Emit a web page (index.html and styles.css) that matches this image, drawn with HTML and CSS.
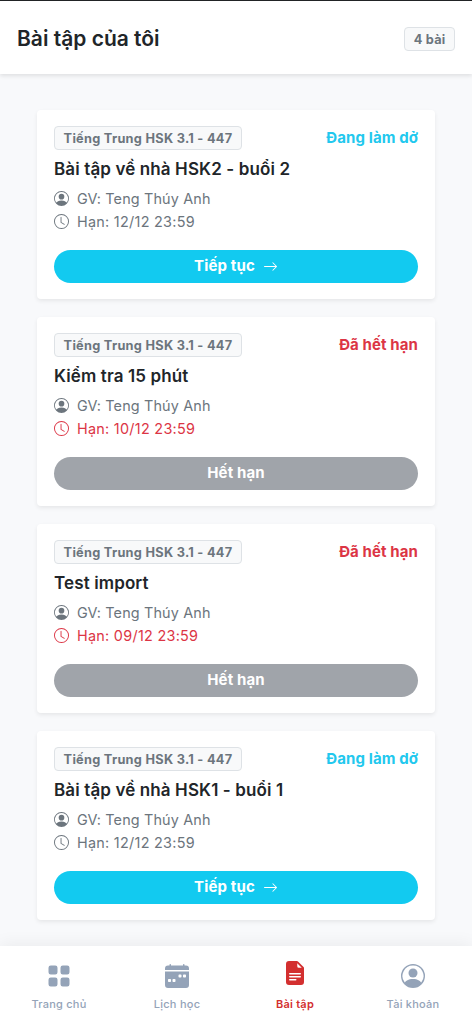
FILE: index.html
```html
<!DOCTYPE html>
<html lang="vi">
<head>
<meta charset="utf-8">
<title>Bài tập của tôi</title>
<link rel="stylesheet" href="styles.css">
</head>
<body>
<svg class="sprite" aria-hidden="true">
  <symbol id="person" viewBox="0 0 16 16"><path d="M11 6a3 3 0 1 1-6 0 3 3 0 0 1 6 0"/><path fill-rule="evenodd" d="M0 8a8 8 0 1 1 16 0A8 8 0 0 1 0 8m8-7a7 7 0 0 0-5.468 11.37C3.242 11.226 4.805 10 8 10s4.757 1.225 5.468 2.37A7 7 0 0 0 8 1"/></symbol>
  <symbol id="clock" viewBox="0 0 16 16"><path d="M8 3.5a.5.5 0 0 0-1 0V9a.5.5 0 0 0 .252.434l3.5 2a.5.5 0 0 0 .496-.868L8 8.71z"/><path d="M8 16A8 8 0 1 0 8 0a8 8 0 0 0 0 16m7-8A7 7 0 1 1 1 8a7 7 0 0 1 14 0"/></symbol>
  <symbol id="arrow" viewBox="0 0 16 16"><path fill-rule="evenodd" d="M1 8a.5.5 0 0 1 .5-.5h11.793l-3.147-3.146a.5.5 0 0 1 .708-.708l4 4a.5.5 0 0 1 0 .708l-4 4a.5.5 0 0 1-.708-.708L13.293 8.5H1.5A.5.5 0 0 1 1 8"/></symbol>
</svg>
<div class="app">
  <header class="header">
    <h1 class="header-title">Bài tập của tôi</h1>
    <span class="badge">4 bài</span>
  </header>
  <main class="list">
    <article class="card">
      <div class="card-top"><span class="badge badge-class">Tiếng Trung HSK 3.1 - 447</span><span class="status status-progress">Đang làm dở</span></div>
      <h2 class="card-title">Bài tập về nhà HSK2 - buổi 2</h2>
      <div class="meta"><svg class="meta-icon"><use href="#person"/></svg><span>GV: Teng Thúy Anh</span></div>
      <div class="meta"><svg class="meta-icon"><use href="#clock"/></svg><span class="due">Hạn: 12/12 23:59</span></div>
      <button class="btn btn-continue"><span>Tiếp tục</span><svg class="btn-icon"><use href="#arrow"/></svg></button>
    </article>
    <article class="card">
      <div class="card-top"><span class="badge badge-class">Tiếng Trung HSK 3.1 - 447</span><span class="status status-late">Đã hết hạn</span></div>
      <h2 class="card-title">Kiểm tra 15 phút</h2>
      <div class="meta"><svg class="meta-icon"><use href="#person"/></svg><span>GV: Teng Thúy Anh</span></div>
      <div class="meta meta-late"><svg class="meta-icon"><use href="#clock"/></svg><span class="due">Hạn: 10/12 23:59</span></div>
      <button class="btn btn-expired">Hết hạn</button>
    </article>
    <article class="card">
      <div class="card-top"><span class="badge badge-class">Tiếng Trung HSK 3.1 - 447</span><span class="status status-late">Đã hết hạn</span></div>
      <h2 class="card-title">Test import</h2>
      <div class="meta"><svg class="meta-icon"><use href="#person"/></svg><span>GV: Teng Thúy Anh</span></div>
      <div class="meta meta-late"><svg class="meta-icon"><use href="#clock"/></svg><span class="due">Hạn: 09/12 23:59</span></div>
      <button class="btn btn-expired">Hết hạn</button>
    </article>
    <article class="card">
      <div class="card-top"><span class="badge badge-class">Tiếng Trung HSK 3.1 - 447</span><span class="status status-progress">Đang làm dở</span></div>
      <h2 class="card-title">Bài tập về nhà HSK1 - buổi 1</h2>
      <div class="meta"><svg class="meta-icon"><use href="#person"/></svg><span>GV: Teng Thúy Anh</span></div>
      <div class="meta"><svg class="meta-icon"><use href="#clock"/></svg><span class="due">Hạn: 12/12 23:59</span></div>
      <button class="btn btn-continue"><span>Tiếp tục</span><svg class="btn-icon"><use href="#arrow"/></svg></button>
    </article>
  </main>
  <nav class="nav">
    <a class="nav-item"><svg class="nav-icon" viewBox="0 0 16 16"><path d="M1 2.5A1.5 1.5 0 0 1 2.5 1h3A1.5 1.5 0 0 1 7 2.5v3A1.5 1.5 0 0 1 5.5 7h-3A1.5 1.5 0 0 1 1 5.5zm8 0A1.5 1.5 0 0 1 10.5 1h3A1.5 1.5 0 0 1 15 2.5v3A1.5 1.5 0 0 1 13.5 7h-3A1.5 1.5 0 0 1 9 5.5zm-8 8A1.5 1.5 0 0 1 2.5 9h3A1.5 1.5 0 0 1 7 10.5v3A1.5 1.5 0 0 1 5.5 15h-3A1.5 1.5 0 0 1 1 13.5zm8 0A1.5 1.5 0 0 1 10.5 9h3a1.5 1.5 0 0 1 1.5 1.5v3a1.5 1.5 0 0 1-1.5 1.5h-3A1.5 1.5 0 0 1 9 13.5z"/></svg><span>Trang chủ</span></a>
    <a class="nav-item"><svg class="nav-icon" viewBox="0 0 16 16"><path d="M4 .5a.5.5 0 0 0-1 0V1H2a2 2 0 0 0-2 2v1h16V3a2 2 0 0 0-2-2h-1V.5a.5.5 0 0 0-1 0V1H4zM16 14V5H0v9a2 2 0 0 0 2 2h12a2 2 0 0 0 2-2M9.5 7h1a.5.5 0 0 1 .5.5v1a.5.5 0 0 1-.5.5h-1a.5.5 0 0 1-.5-.5v-1a.5.5 0 0 1 .5-.5m3 0h1a.5.5 0 0 1 .5.5v1a.5.5 0 0 1-.5.5h-1a.5.5 0 0 1-.5-.5v-1a.5.5 0 0 1 .5-.5M2 10.5a.5.5 0 0 1 .5-.5h1a.5.5 0 0 1 .5.5v1a.5.5 0 0 1-.5.5h-1a.5.5 0 0 1-.5-.5zm3.5-.5h1a.5.5 0 0 1 .5.5v1a.5.5 0 0 1-.5.5h-1a.5.5 0 0 1-.5-.5v-1a.5.5 0 0 1 .5-.5"/></svg><span>Lịch học</span></a>
    <a class="nav-item nav-active"><svg class="nav-icon" viewBox="0 0 16 16"><path d="M9.293 0H4a2 2 0 0 0-2 2v12a2 2 0 0 0 2 2h8a2 2 0 0 0 2-2V4.707A1 1 0 0 0 13.707 4L10 .293A1 1 0 0 0 9.293 0M9.5 3.5v-2l3 3h-2a1 1 0 0 1-1-1M4.5 9a.5.5 0 0 1 0-1h7a.5.5 0 0 1 0 1zM4 10.5a.5.5 0 0 1 .5-.5h7a.5.5 0 0 1 0 1h-7a.5.5 0 0 1-.5-.5m.5 2.5a.5.5 0 0 1 0-1h4a.5.5 0 0 1 0 1z"/></svg><span>Bài tập</span></a>
    <a class="nav-item"><svg class="nav-icon"><use href="#person"/></svg><span>Tài khoản</span></a>
  </nav>
</div>
</body>
</html>
```
FILE: styles.css
```css
* { box-sizing: border-box; }
body { margin: 0; background: #f8f9fb; font-family: Inter, sans-serif; color: #212529; }
svg { fill: currentColor; flex: none; }
.sprite { display: none; }
.app { height: 1024px; display: flex; flex-direction: column; overflow: hidden; }
.header {
  height: 74px; padding: 3px 17px 0; flex: none;
  display: flex; align-items: center; justify-content: space-between;
  background: #fff; border-top: 1px solid #212325;
  box-shadow: 0 2px 4px rgba(0, 0, 0, .1);
}
.header-title { margin: 0; font-size: 21px; line-height: 28px; font-weight: 640; }
.badge {
  height: 24px; padding: 0 8.5px; display: inline-flex; align-items: center;
  border: 1px solid #dee2e6; border-radius: 4px; background: #f8f9fa;
  color: #6c757d; font-size: 12.75px; font-weight: 650; letter-spacing: .2px; white-space: nowrap;
}
.list { flex: 1; padding: 35.6px 37px 0; display: flex; flex-direction: column; gap: 17.4px; }
.card {
  height: 189.6px; flex: none; padding: 16.7px 17px 16.5px; display: flex; flex-direction: column;
  background: #fff; border-radius: 4px; box-shadow: 0 2px 4px rgba(0, 0, 0, .075);
}
.card-top { display: flex; justify-content: space-between; align-items: flex-start; }
.badge-class { padding: 0 8.6px; letter-spacing: .28px; }
.status { font-size: 15px; line-height: 24px; font-weight: 650; letter-spacing: .1px; }
.status-progress { color: #22c8ee; }
.status-late { color: #dc3545; }
.card-title { margin: 7.5px 0 7.7px; font-size: 17px; line-height: 22px; font-weight: 640; letter-spacing: .12px; white-space: nowrap; }
.meta { display: flex; align-items: center; gap: 8px; height: 22.5px; font-size: 14.4px; color: #6c757d; letter-spacing: .16px; }
.due { letter-spacing: .28px; }
.meta-late { color: #dc3545; }
.meta-icon { width: 15px; height: 15px; }
.btn {
  height: 33px; margin-top: auto; padding: 0; border: 0; border-radius: 17px;
  display: flex; align-items: center; justify-content: center; gap: 8px;
  font: 650 15px/22px Inter, sans-serif; letter-spacing: .15px; color: #fff;
}
.btn-icon { width: 15px; height: 15px; }
.btn-continue { background: #12caf0; }
.btn-expired { background: #a0a4aa; }
.nav {
  height: 78px; flex: none; display: grid; grid-template-columns: repeat(4, 1fr);
  background: #fff; box-shadow: 0 -2px 16px rgba(0, 0, 0, .06);
}
.nav-item {
  display: flex; flex-direction: column; align-items: center; padding-top: 17.7px;
  color: #94a3b8; font-size: 11px; line-height: 16px; font-weight: 500; letter-spacing: .25px; gap: 8.5px;
}
.nav-icon { width: 24px; height: 24px; }
.nav-active { color: #d32f2f; font-weight: 600; padding-top: 15.2px; gap: 11px; }
```
